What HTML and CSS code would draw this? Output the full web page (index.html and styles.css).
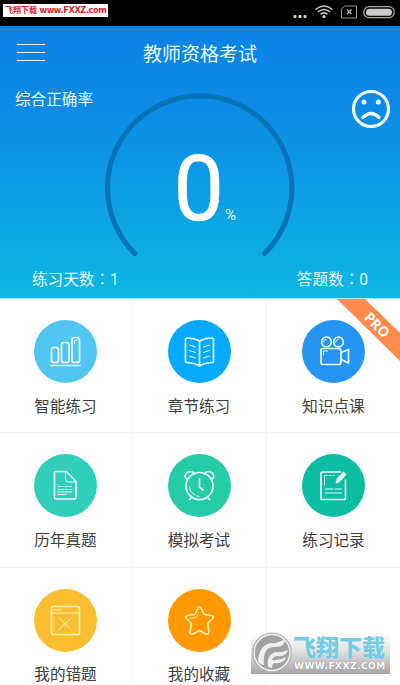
FILE: index.html
```html
<!DOCTYPE html>
<html lang="zh-CN">
<head>
<meta charset="utf-8">
<title>教师资格考试</title>
<link rel="stylesheet" href="styles.css">
</head>
<body>
<div class="screen">
  <div class="status">
    <span class="clock">10:46</span>
    <svg class="status-icons" width="120" height="26" viewBox="0 0 120 26" fill="none">
      <g fill="#ddd"><rect x="13.5" y="15" width="3" height="3" rx="1"/><rect x="18.5" y="15" width="3" height="3" rx="1"/><rect x="23.5" y="15" width="3" height="3" rx="1"/><circle cx="44" cy="16.5" r="1.6"/></g>
      <g stroke="#ccc" stroke-width="1.6"><path d="M35.5 9.5Q44 2.5 52.500 9.500M38 12Q44 7 50 12M40.500 14.300Q44 11.500 47.500 14.300"/></g>
      <path d="M64.500 6H76.500V18H61.500V9Z" stroke="#999"/>
      <path d="M67 9.500L71.500 14M71.500 9.500L67 14" stroke="#bbb" stroke-width="1.300"/>
      <rect x="83.700" y="6.700" width="30.600" height="11" rx="5.500" stroke="#aaa" stroke-width="1.200"/>
      <rect x="86" y="8.700" width="26" height="7" rx="3.500" fill="#ccc"/>
    </svg>
    <div class="site-tag"><b>飞翔下载</b><span>www.FXXZ.com</span></div>
  </div>
  <header class="hero">
    <div class="bar">
      <svg class="menu" width="28" height="18" viewBox="0 0 28 18" stroke="#d9f3ff"><path d="M0 .5H28M0 8.500H28M0 16.500H28"/></svg>
      <h1>教师资格考试</h1>
    </div>
    <div class="summary">
      <span class="rate-label">综合正确率</span>
      <div class="gauge">
        <svg width="190" height="190" viewBox="0 0 190 190" fill="none" stroke="#0572b9" stroke-width="5" stroke-linecap="round"><path d="M29.800 161.500A92.200 92.200 0 1 1 159.600 161.500"/></svg>
        <div class="score">0<small>%</small></div>
      </div>
      <svg class="face" width="40" height="40" viewBox="0 0 40 40" fill="none" stroke="#f2fdff"><circle cx="20" cy="20" r="17.500" stroke-width="3.200"/><g fill="#f2fdff" stroke="none"><circle cx="13" cy="13" r="2.500"/><circle cx="27.300" cy="13" r="2.500"/></g><path d="M12 28.500Q20 20.500 28 28.500" stroke-width="3.200" stroke-linecap="round"/></svg>
    </div>
    <div class="stats"><span>练习天数<i lang="zh-TW">：</i>1</span><span>答题数<i lang="zh-TW">：</i>0</span></div>
  </header>
  <main class="grid">
    <section class="cell">
      <svg class="icon sky" viewBox="0 0 63 63"><rect x="17.500" y="27.500" width="7" height="15" rx="2.500"/><rect x="27.500" y="22.500" width="7.500" height="20" rx="2.500"/><rect x="38" y="17.500" width="7.500" height="25" rx="2.500"/><path d="M17 45.500H46"/><path class="fine" d="M40.500 24V21L43 19.500"/></svg>
      <span>智能练习</span>
    </section>
    <section class="cell">
      <svg class="icon blue" viewBox="0 0 63 63"><path d="M31.500 21Q26 18 19 18Q17.500 18 17.500 20V41Q17.500 42.500 19 42.500Q27 43 31.500 46Q36 43 44 42.500Q45.500 42.500 45.500 41V20Q45.500 18 44 18Q37 18 31.500 21ZM31.500 21V46"/><path class="fine" d="M21.500 25L27.500 27M21.500 30.500L27.500 32.500M21.500 36L27.500 38M35.500 27L41.500 25M35.500 32.500L41.500 30.500M35.500 38L41.500 36"/></svg>
      <span>章节练习</span>
    </section>
    <section class="cell">
      <svg class="icon royal" viewBox="0 0 63 63"><circle cx="24.500" cy="22" r="4.800"/><circle cx="36.500" cy="22" r="4.800"/><path d="M21 28.500H36.500Q39 28.500 39 31V32.500L46.500 29.500V43L39 39.500V42Q39 44.500 36.500 44.500H21Q19 44.500 19 42.500V30.500Q19 28.500 21 28.500ZM39 33V39"/><path class="fine" d="M21.500 35V31H25.500M21.500 22Q22 19.500 24 19.500M33.500 22Q34 19.500 36 19.500"/></svg>
      <span>知识点课</span>
      <div class="ribbon"><b>PRO</b></div>
    </section>
    <section class="cell">
      <svg class="icon aqua" viewBox="0 0 63 63"><path d="M21.500 17.500H32.500L42 27.500V43.500Q42 45 40.500 45H22Q20.500 45 20.500 43.500V18.500Q20.500 17.500 21.500 17.500Z"/><path class="fine" d="M31.500 18V25Q31.500 28 34.500 28H42"/><path class="fine" stroke-dasharray="6 1 3 1" d="M24 32.500H37.500M24 35.500H38M24 38H37.500M24 40.500H32"/></svg>
      <span>历年真题</span>
    </section>
    <section class="cell">
      <svg class="icon green" viewBox="0 0 63 63"><circle cx="31.500" cy="32" r="13.500"/><path d="M18.500 25Q16.500 23 17.500 20.500Q19 17.500 22.500 17.500Q25 17.500 26.500 20M44.500 25Q46.500 23 45.500 20.500Q44 17.500 40.500 17.500Q38 17.500 36.500 20M24 43L21.500 45.500M39 43L41.500 45.500M31.500 25V33L35 36"/><path class="fine" d="M21.500 33Q22 38 27 41M29 42L31 42.300"/></svg>
      <span>模拟考试</span>
    </section>
    <section class="cell">
      <svg class="icon teal" viewBox="0 0 63 63"><path d="M38.500 18H20Q19 18 19 19V44.500Q19 45.500 20 45.500H42.500Q43.500 45.500 43.500 44.500V26"/><path class="fine" d="M22.500 31V21.500H25M27 21.500H29M31 21.500H32M23.500 35H31M33 35H39.500M23.500 39H31M32 39H39.500"/><path d="M41.500 18.500L43.500 20.500L37.500 27L34.500 28.500L35.500 25Z" class="pen"/></svg>
      <span>练习记录</span>
    </section>
    <section class="cell">
      <svg class="icon yellow" viewBox="0 0 63 63"><rect x="17.500" y="17.500" width="28" height="28" rx="2"/><path class="fine" d="M18 24H45M20 21H28M25 29L37.500 40.500M37.500 29L25 40.500"/></svg>
      <span>我的错题</span>
    </section>
    <section class="cell">
      <svg class="icon orange" viewBox="0 0 63 63"><path d="M30 19Q31.500 16.500 33 19L36 25.500L43.500 26.500Q46.500 27.300 44.500 29.500L39.500 34.500L41 42.500Q41 46 38 45L31.500 41.500L25 45Q22 46 22 42.500L23.500 34.500L18.500 29.500Q16.500 27.300 19.500 26.500L27 25.500Z"/><path class="fine" d="M22.500 29.500L28.500 28L30 25"/></svg>
      <span>我的收藏</span>
    </section>
    <section class="cell"></section>
  </main>
  <div class="stamp">
    <svg width="42" height="42" viewBox="0 0 42 42"><circle cx="21" cy="20.500" r="19.500" fill="#8f8f8f" stroke="#bbb"/><circle cx="21" cy="20.500" r="18" fill="#a2a2a2" stroke="#f5f5f5" stroke-width="1.500"/><path d="M7 29Q8 14 19 11Q26 12 34 7Q34 15 25 15Q16 14 14 21Q12 28 13 33Q9 33 7 29ZM17 35Q15 23 24 20Q29 21 37 18Q35 25 26 24Q21 25 21 28Q28 29 35 25Q33 32 24 31Q21 31 21 36Z" fill="#eee"/></svg>
    <div class="stamp-text"><b>飞翔下载</b><span>WWW.FXXZ.COM</span></div>
  </div>
</div>
</body>
</html>
```
FILE: styles.css
```css
* { box-sizing: border-box; }
body { margin: 0; font-family: Roboto, "Noto Sans CJK SC", sans-serif; }
.screen { position: relative; width: 400px; height: 685px; overflow: hidden; background: #fff; }
.status { position: relative; display: flex; justify-content: space-between; height: 26px; background: #000; }
.clock { padding: 5px 0 0 6px; color: #ddd; font-size: 13px; line-height: 16px; }
.site-tag { position: absolute; left: 3px; top: 4px; display: flex; align-items: center; width: 105px; height: 13px; padding-left: 2px; background: #fff; color: #e51c1c; white-space: nowrap; font-size: 8px; line-height: 13px; }
.site-tag b { width: 34.500px; font-weight: 700; }
.site-tag span { font: 700 8.200px/13px "DejaVu Sans", sans-serif; letter-spacing: -0.380px; }
.hero { height: 273px; background: linear-gradient(#0b82e5, #0c8be6 30%, #0da0e5 65%, #0cb7e5); color: #e8faff; border-bottom: 1px solid #9eeef8; }
.bar { display: grid; grid-template-columns: 100px 200px 100px; align-items: center; height: 54px; }
.menu { margin-left: 17px; }
h1 { margin: 4px 0 0; text-align: center; font-size: 19px; font-weight: 400; line-height: 28px; }
.summary { display: grid; grid-template-columns: 104.500px 190px 1fr; height: 180px; }
.rate-label { padding: 9px 0 0 15px; font-size: 15.600px; line-height: 22px; white-space: nowrap; }
.gauge { display: grid; margin-top: 12px; height: 190px; }
.gauge > * { grid-area: 1 / 1; }
.score { display: flex; align-items: baseline; padding: 45px 0 0 69px; font-size: 90px; line-height: 106px; color: #fff; -webkit-text-stroke: 0.500px #fff; }
.score small { width: 14px; margin-left: 1px; font-size: 15px; line-height: 20px; color: #e8faff; -webkit-text-stroke: 0; }
.face { margin: 9px 0 0 56px; }
.stats { display: flex; justify-content: space-between; height: 38px; padding: 9px 32px 0; font-size: 15.600px; line-height: 22px; }
.stats span { line-height: 22px; margin-top: -2px; }
.stats i { font-family: "Noto Sans CJK TC", sans-serif; font-style: normal; }
.grid { display: grid; grid-template-columns: 133px 134px 133px; grid-auto-rows: 134.300px; }
.cell { position: relative; display: flex; flex-direction: column; align-items: center; padding-top: 21px; border-right: 2px solid #f7f7f7; border-bottom: 1px solid #f2f2f2; color: #404040; font-size: 15.600px; line-height: 24px; overflow: hidden; }
.cell:nth-child(3n) { border-right: 0; }
.cell > span { margin-top: 11.500px; }
.icon { width: 63px; height: 63px; border-radius: 50%; fill: none; stroke: #e7fcff; stroke-width: 1.700; stroke-linecap: round; stroke-linejoin: round; }
.fine { stroke-width: 1; }
.pen { fill: #e7fcff; }
.sky { background: #4fc5ef; }
.blue { background: #03a9fc; }
.royal { background: #2594f3; }
.aqua { background: #31cfbb; }
.green { background: #25cba5; }
.teal { background: #0bbea3; }
.yellow { background: #fabe2e; stroke: #fff5b8; }
.orange { background: #ff9801; stroke: #fff0b0; }
.ribbon { position: absolute; right: 0; top: 0; width: 63px; height: 62px; background: #ff8c4c; clip-path: polygon(0 0, 28px 0, 100% 34px, 100% 100%); }
.ribbon b { position: absolute; left: 23px; top: 16px; width: 34px; text-align: center; color: #fff; font: 700 14px/20px "Open Sans", sans-serif; transform: rotate(45deg); }
.stamp { position: absolute; left: 251px; top: 632px; display: flex; width: 139px; height: 42px; background: linear-gradient(rgba(255,255,255,0), #e2e2e2 45%, #a6a6a6); }
.stamp-text { display: flex; flex-direction: column; color: #fff; white-space: nowrap; }
.stamp-text b { margin-top: 4px; color: #73cbe4; font-size: 23px; font-weight: 900; line-height: 25px; text-shadow: 0 0 1px #fff; }
.stamp-text span { margin-left: 1px; font: 700 9px/9px "DejaVu Sans", sans-serif; letter-spacing: 0.500px; margin-top: 1px; text-shadow: 0 0 1px #777; }
```
